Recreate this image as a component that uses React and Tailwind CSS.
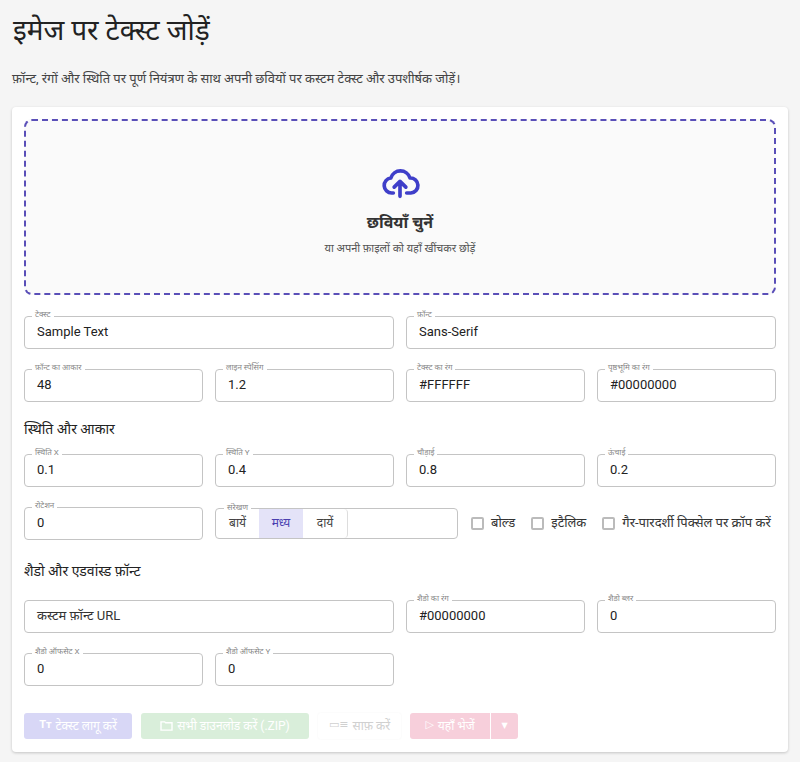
import React from "react";

const F = { fontFamily: 'Roboto, "Noto Sans", "DejaVu Sans", sans-serif' };

function Field({ label, value, className = "", placeholder }) {
  return (
    <div className={"relative h-[33px] " + className}>
      <div className="h-full border border-[#c4c4c4] rounded-[4px] flex items-center px-3 text-[13px] text-[#222]">
        {value}
        {placeholder && <span className="text-[#333]">{placeholder}</span>}
      </div>
      {label && (
        <span className="absolute -top-[6px] left-[8px] px-[3px] bg-white text-[8px] leading-[10px] text-[#888]">
          {label}
        </span>
      )}
    </div>
  );
}

function Box({ label }) {
  return (
    <label className="flex items-center gap-[7px] text-[13px] text-[#333]">
      <span className="w-[13px] h-[13px] border-2 border-[#bbb] rounded-[2px]" />
      {label}
    </label>
  );
}

export default function App() {
  return (
    <div style={F} className="min-h-[762px] bg-[#f5f5f5] px-3 pt-[12px]">
      <h1 className="text-[28px] leading-[38px] text-[#222] pl-[1px]">इमेज पर टेक्स्ट जोड़ें</h1>
      <p className="mt-[19px] text-[13px] text-[#444]">
        फ़ॉन्ट, रंगों और स्थिति पर पूर्ण नियंत्रण के साथ अपनी छवियों पर कस्टम टेक्स्ट और उपशीर्षक जोड़ें।
      </p>
      <div className="mt-[18px] bg-white rounded-[4px] shadow-[0_1px_3px_rgba(0,0,0,0.2)] p-3 pb-[13px]">
        <div className="h-[176px] border-2 border-dashed border-[#5a4fb8] rounded-[8px] bg-[#fafafa] flex flex-col items-center justify-center">
          <svg width="40" height="40" viewBox="0 0 24 24" fill="none" stroke="#3f3fc9" strokeWidth="2.2" strokeLinecap="round" strokeLinejoin="round" className="mt-[8px]">
            <path d="M8 18H7a4.5 4.5 0 0 1-.5-8.97A6 6 0 0 1 18 9a4.5 4.5 0 0 1 .5 9H16" />
            <path d="M12 20v-9M8.5 14.5 12 11l3.5 3.5" />
          </svg>
          <div className="mt-[8px] text-[16px] font-bold text-[#333]">छवियाँ चुनें</div>
          <div className="mt-[6px] text-[11px] text-[#555]">या अपनी फ़ाइलों को यहाँ खींचकर छोड़ें</div>
        </div>

        <div className="mt-[21px] grid grid-cols-2 gap-3">
          <Field label="टेक्स्ट" value="Sample Text" />
          <Field label="फ़ॉन्ट" value="Sans-Serif" />
        </div>
        <div className="mt-[20px] grid grid-cols-4 gap-3">
          <Field label="फ़ॉन्ट का आकार" value="48" />
          <Field label="लाइन स्पेसिंग" value="1.2" />
          <Field label="टेक्स्ट का रंग" value="#FFFFFF" />
          <Field label="पृष्ठभूमि का रंग" value="#00000000" />
        </div>
        <div className="mt-[17px] text-[14px] text-[#222]">स्थिति और आकार</div>
        <div className="mt-[14px] grid grid-cols-4 gap-3">
          <Field label="स्थिति X" value="0.1" />
          <Field label="स्थिति Y" value="0.4" />
          <Field label="चौड़ाई" value="0.8" />
          <Field label="ऊंचाई" value="0.2" />
        </div>
        <div className="mt-[20px] flex items-center gap-3">
          <Field label="रोटेशन" value="0" className="w-[179px]" />
          <div className="relative w-[243px] h-[31px] border border-[#c4c4c4] rounded-[4px] flex items-stretch">
            <span className="absolute -top-[6px] left-[8px] px-[3px] bg-white text-[8px] leading-[10px] text-[#888]">संरेखण</span>
            <div className="flex border-r border-[#ddd] rounded-[4px] text-[12px]">
              <span className="w-[43px] flex items-center justify-center text-[#444]">बायें</span>
              <span className="w-[44px] flex items-center justify-center bg-[#e4e3f8] text-[#4a3fb0]">मध्य</span>
              <span className="w-[44px] flex items-center justify-center text-[#444]">दायें</span>
            </div>
          </div>
          <div className="flex items-center gap-[16px] ml-[1px]">
            <Box label="बोल्ड" />
            <Box label="इटैलिक" />
            <Box label="गैर-पारदर्शी पिक्सेल पर क्रॉप करें" />
          </div>
        </div>
        <div className="mt-[21px] text-[14px] text-[#222]">शैडो और एडवांस्ड फ़ॉन्ट</div>
        <div className="mt-[18px] grid grid-cols-4 gap-3">
          <Field placeholder="कस्टम फ़ॉन्ट URL" className="col-span-2" />
          <Field label="शैडो का रंग" value="#00000000" />
          <Field label="शैडो ब्लर" value="0" />
        </div>
        <div className="mt-[20px] grid grid-cols-4 gap-3">
          <Field label="शैडो ऑफसेट X" value="0" />
          <Field label="शैडो ऑफसेट Y" value="0" />
        </div>
        <div className="mt-[27px] flex items-center gap-[9px] text-[12px] text-white">
          <button className="h-[26px] w-[108px] rounded-[3px] bg-[#d8d7f6] flex items-center justify-center gap-1">
            <span className="font-bold text-[11px]">Tт</span>टेक्स्ट लागू करें
          </button>
          <button className="h-[26px] w-[168px] rounded-[3px] bg-[#d9eeda] flex items-center justify-center gap-1">
            <svg width="13" height="11" viewBox="0 0 14 12" fill="none" stroke="white" strokeWidth="1.5"><path d="M1 2h4l1 1h7v8H1z" /></svg>
            सभी डाउनलोड करें (.ZIP)
          </button>
          <button className="h-[26px] w-[83px] rounded-[3px] bg-white shadow-[0_0_2px_rgba(0,0,0,0.05)] text-[#d0d0d0] flex items-center justify-center gap-1">
            <span className="text-[11px]">▭≡</span>साफ़ करें
          </button>
          <div className="flex h-[26px] rounded-[3px] overflow-hidden">
            <button className="w-[80px] bg-[#f7cfdb] flex items-center justify-center gap-1">
              <span className="text-[11px]">▷</span>यहाँ भेजें
            </button>
            <button className="ml-[1px] w-[27px] bg-[#f7cfdb] flex items-center justify-center text-[8px]">▼</button>
          </div>
        </div>
      </div>
    </div>
  );
}
